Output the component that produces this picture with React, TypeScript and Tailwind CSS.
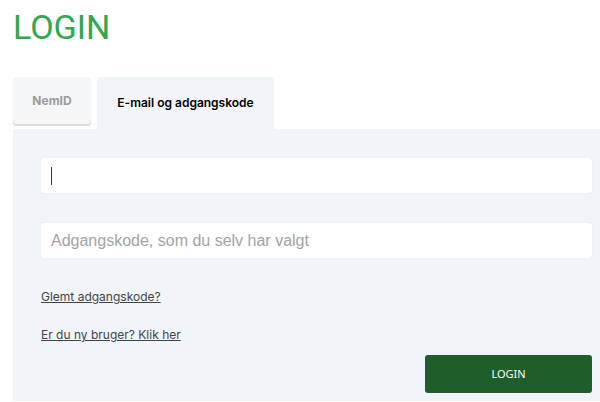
export default function App() {
  return (
    <main className="min-h-screen bg-white pl-[13px] font-['Inter',sans-serif]">
      <h1 className="pt-[7px] text-[34px] leading-[40px] font-normal text-[#2fa84f] font-['Roboto',sans-serif]">
        LOGIN
      </h1>

      <div className="mt-[30px] flex items-start gap-[6px]">
        <button className="h-[47px] w-[78px] rounded-[3px] bg-[#f4f6f8] text-[12px] font-bold text-[#9a9a9a] shadow-[0_2px_1px_rgba(0,0,0,0.15)]">
          NemID
        </button>
        <button className="h-[52px] w-[177px] rounded-t-[3px] bg-[#f1f5f9] text-[12px] font-semibold text-black">
          E-mail og adgangskode
        </button>
      </div>

      <section className="bg-[#f1f5f9] pl-[28px] pr-[8px] pt-[29px] pb-[8px]">
        <div className="flex h-[35px] items-center rounded-[3px] bg-white pl-[10px] shadow-[0_0_1px_rgba(0,0,0,0.15)]">
          <span className="h-[18px] w-px bg-[#333]" />
        </div>
        <input
          placeholder="Adgangskode, som du selv har valgt"
          className="mt-[30px] h-[35px] w-full rounded-[3px] bg-white px-[10px] text-[16px] font-['Liberation_Sans',sans-serif] placeholder:text-[#a3a3a3] shadow-[0_0_1px_rgba(0,0,0,0.15)] outline-none"
        />
        <div className="mt-[31px] text-[12px] leading-[16px] text-[#444] underline">
          Glemt adgangskode?
        </div>
        <div className="mt-[22px] text-[12px] leading-[16px] text-[#444] underline">
          Er du ny bruger? Klik her
        </div>
        <div className="mt-[12px] flex justify-end">
          <button className="h-[38px] w-[167px] rounded-[3px] bg-[#1d5e2a] text-[11px] text-white font-['Noto_Sans',sans-serif]">
            LOGIN
          </button>
        </div>
      </section>
    </main>
  );
}
